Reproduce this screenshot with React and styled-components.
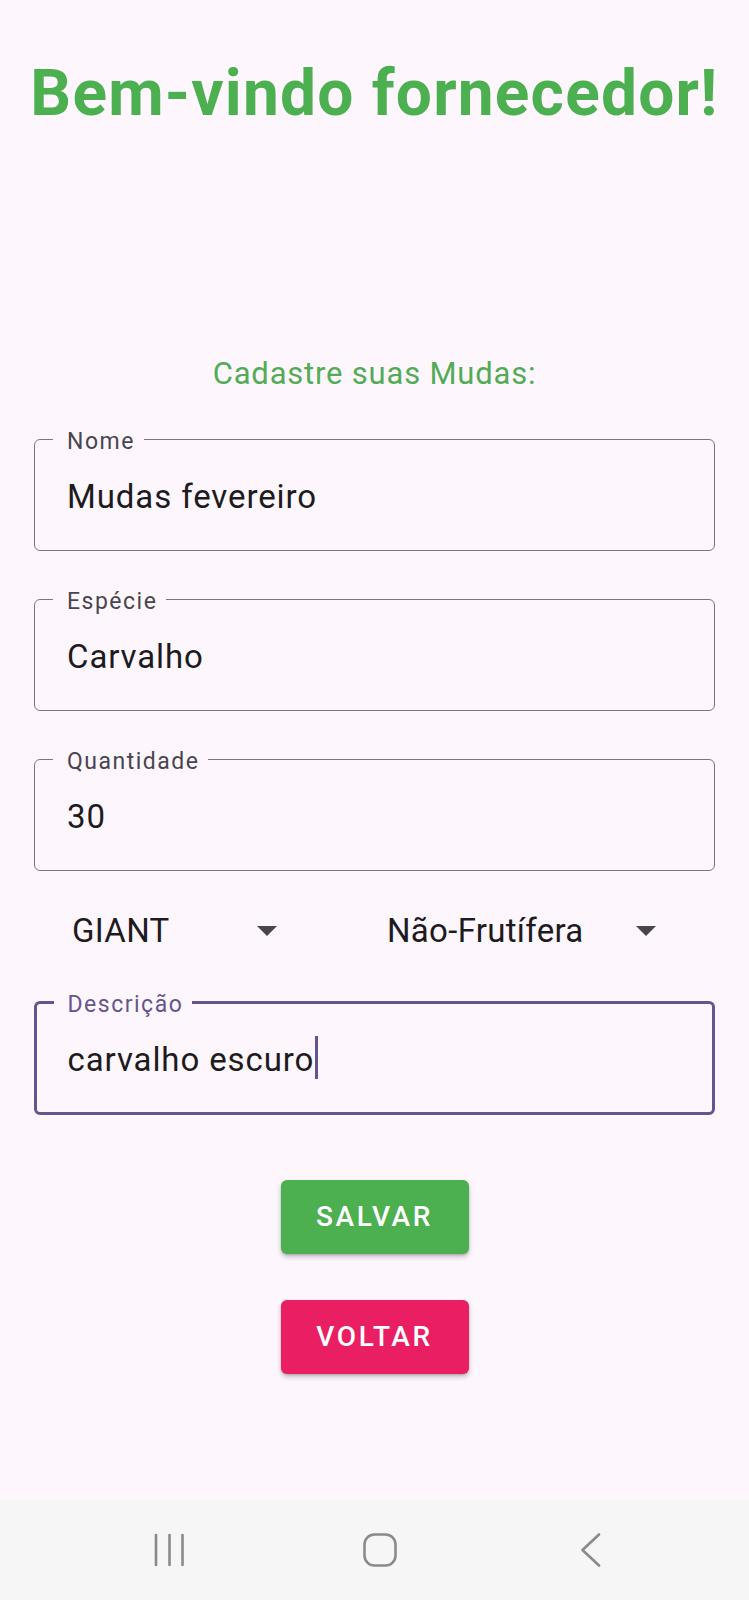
import React from 'react';
import styled, { createGlobalStyle } from 'styled-components';

const GlobalStyle = createGlobalStyle`
  html, body {
    margin: 0;
    padding: 0;
    background: #FDF7FD;
    font-family: Roboto, "Noto Sans", sans-serif;
  }
`;

const Screen = styled.div`
  width: 749px;
  min-height: 1600px;
  display: flex;
  flex-direction: column;
  background: #FDF7FD;
`;

const Main = styled.main`
  flex: 1;
  display: flex;
  flex-direction: column;
  padding: 56px 34px 0;
`;

const Title = styled.h1`
  margin: 0 -34px;
  text-align: center;
  white-space: nowrap;
  font-size: 64px;
  line-height: 76px;
  font-weight: 700;
  letter-spacing: 1.2px;
  color: #4CAF50;
`;

const Subtitle = styled.h2`
  margin: 222px 0 0;
  text-align: center;
  font-size: 31px;
  line-height: 40px;
  font-weight: 400;
  letter-spacing: 0.8px;
  color: #53AB57;
`;

const Form = styled.form`
  display: flex;
  flex-direction: column;
  margin-top: 28px;
`;

const Field = styled.fieldset`
  margin: 0 0 ${(p) => p.$gap || 0}px;
  min-width: 0;
  border: ${(p) => (p.$focused ? '3px solid #65558F' : '1.5px solid #79747E')};
  border-radius: 6px;
  padding: 0 ${(p) => (p.$focused ? 30.5 : 32)}px ${(p) => (p.$focused ? 31.5 : 33)}px;
`;

const Legend = styled.legend`
  margin-left: -14px;
  padding: 6px 9px 0 14px;
  font-size: 23px;
  line-height: 28px;
  letter-spacing: 1.5px;
  color: ${(p) => (p.$focused ? '#65558F' : '#49454F')};
`;

const Value = styled.div`
  padding-top: 21px;
  font-size: 33px;
  line-height: 40px;
  letter-spacing: 0.9px;
  color: #1D1B20;
  white-space: nowrap;
`;

const Cursor = styled.span`
  display: inline-block;
  width: 3px;
  height: 43px;
  margin: -6px 0 0 1px;
  vertical-align: -8px;
  background: #65558F;
`;

const SpinnerRow = styled.div`
  display: flex;
  gap: 110px;
  height: 48px;
  margin: 36px 0 30px;
  padding-left: 38px;
`;

const Spinner = styled.div`
  width: ${(p) => p.$width}px;
  display: flex;
  align-items: center;
  justify-content: space-between;
  font-size: 33px;
  line-height: 48px;
  letter-spacing: 0.3px;
  color: #1D1B20;
`;

const Arrow = styled.span`
  width: 0;
  height: 0;
  border-left: 10px solid transparent;
  border-right: 10px solid transparent;
  border-top: 10px solid #49454F;
`;

const Buttons = styled.div`
  display: flex;
  flex-direction: column;
  align-items: center;
  gap: 46px;
  margin-top: 65px;
`;

const Button = styled.button`
  width: 188px;
  height: 74px;
  border: none;
  border-radius: 6px;
  background: ${(p) => p.$bg};
  color: #fff;
  font-family: Roboto, sans-serif;
  font-size: 28px;
  font-weight: 500;
  letter-spacing: 2.6px;
  box-shadow: 0 3px 5px rgba(0, 0, 0, 0.22), 0 1px 2px rgba(0, 0, 0, 0.15);
`;

const NavBar = styled.nav`
  height: 100px;
  background: #F6F6F6;
  display: grid;
  grid-template-columns: repeat(3, 211px);
  padding-left: 63px;
  align-items: center;
  justify-items: center;
`;

const NavIcon = styled.svg`
  display: block;
  stroke: #8A8A8A;
  stroke-width: 2.6;
  fill: none;
  stroke-linecap: round;
  stroke-linejoin: round;
`;

function TextField({ label, value, focused, gap }) {
  return (
    <Field $focused={focused} $gap={gap}>
      <Legend $focused={focused}>{label}</Legend>
      <Value>
        {value}
        {focused && <Cursor />}
      </Value>
    </Field>
  );
}

export default function App() {
  return (
    <>
      <GlobalStyle />
      <Screen>
        <Main>
          <Title>Bem-vindo fornecedor!</Title>
          <Subtitle>Cadastre suas Mudas:</Subtitle>
          <Form onSubmit={(e) => e.preventDefault()}>
            <TextField label="Nome" value="Mudas fevereiro" gap={31} />
            <TextField label="Espécie" value="Carvalho" gap={31} />
            <TextField label="Quantidade" value="30" />
            <SpinnerRow>
              <Spinner $width={205}>
                GIANT
                <Arrow />
              </Spinner>
              <Spinner $width={269}>
                Não-Frutífera
                <Arrow />
              </Spinner>
            </SpinnerRow>
            <TextField label="Descrição" value="carvalho escuro" focused />
            <Buttons>
              <Button type="button" $bg="#4CAF50">SALVAR</Button>
              <Button type="button" $bg="#E91E63">VOLTAR</Button>
            </Buttons>
          </Form>
        </Main>
        <NavBar>
          <NavIcon width="32" height="34" viewBox="0 0 32 34">
            <path d="M3 2v30M16.5 2v30M29.5 2v30" />
          </NavIcon>
          <NavIcon width="34" height="34" viewBox="0 0 34 34">
            <rect x="1.5" y="1.5" width="31" height="31" rx="10" />
          </NavIcon>
          <NavIcon width="22" height="34" viewBox="0 0 22 34">
            <path d="M19 1.5L2.5 17L19 32.5" />
          </NavIcon>
        </NavBar>
      </Screen>
    </>
  );
}
